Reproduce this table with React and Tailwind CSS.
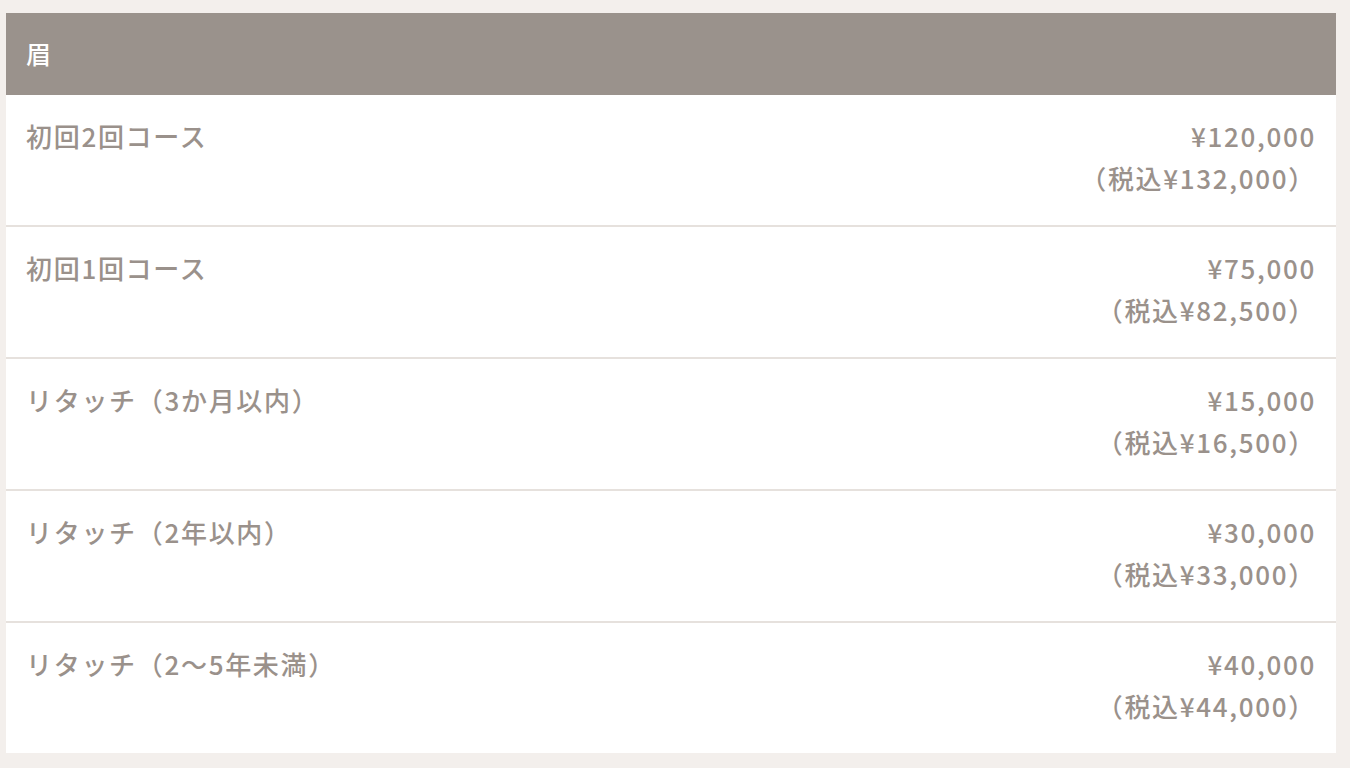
const rows = [
  { name: '初回2回コース', price: '¥120,000', tax: '（税込¥132,000）' },
  { name: '初回1回コース', price: '¥75,000', tax: '（税込¥82,500）' },
  { name: 'リタッチ（3か月以内）', price: '¥15,000', tax: '（税込¥16,500）' },
  { name: 'リタッチ（2年以内）', price: '¥30,000', tax: '（税込¥33,000）' },
  { name: 'リタッチ（2〜5年未満）', price: '¥40,000', tax: '（税込¥44,000）' },
]

export default function App() {
  return (
    <div className="min-h-[768px] bg-[#f3efec] px-[6px] pt-[13px] pb-4 w-[1350px]"
      style={{ fontFamily: '"Noto Sans CJK JP", "Noto Sans", sans-serif' }}>
      <div className="w-[1330px] bg-white">
        <div className="h-[82px] bg-[#9a928c] flex items-center px-5 text-white text-[25px] font-medium tracking-[0.07em]">眉</div>
        {rows.map((r, i) => (
          <div key={i}
            className={`flex justify-between pl-5 pr-[20px] pt-[20px] pb-[26px] text-[#9a918b] text-[26px] font-medium leading-[42px] tracking-[0.065em] ${i < rows.length - 1 ? 'border-b-2 border-[#e6e1dd]' : ''}`}>
            <div>{r.name}</div>
            <div className="text-right">
              <div>{r.price}</div>
              <div>{r.tax}</div>
            </div>
          </div>
        ))}
      </div>
    </div>
  )
}
